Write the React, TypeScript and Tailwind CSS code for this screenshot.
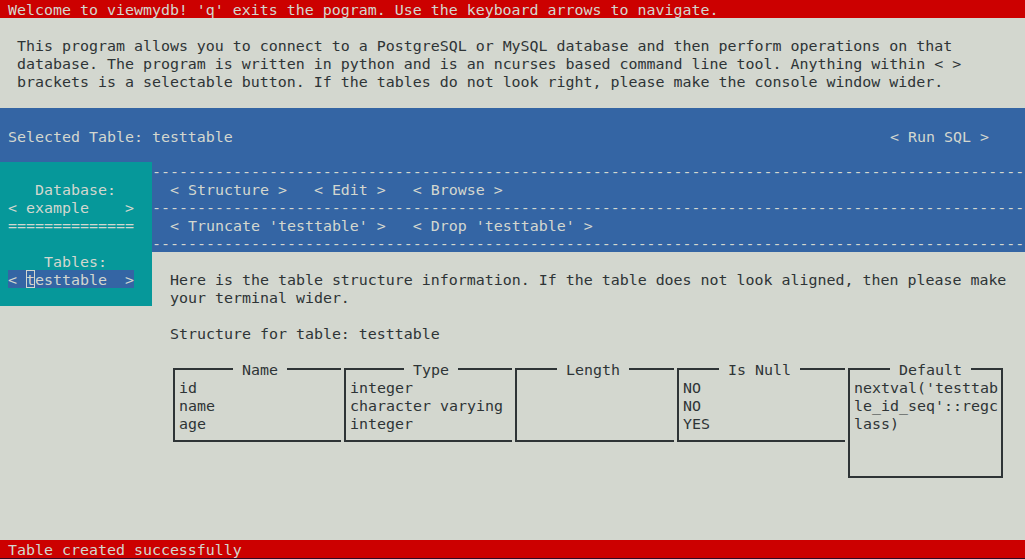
const Row = ({ children, className = "" }: { children?: React.ReactNode; className?: string }) => (
  <div className={`h-[18px] whitespace-pre pt-[1px] ${className}`}>{children}</div>
);

const dashes = "-".repeat(97);

type BoxProps = {
  cols: number;
  inner: number;
  height: number;
  title: string;
  titlePad: number;
  lines: string[];
  closed?: boolean;
};

const Box = ({ cols, inner, height, title, titlePad, lines, closed }: BoxProps) => (
  <div style={{ width: cols * 9 }} className="shrink-0">
    <div
      style={{ width: inner, height }}
      className={`ml-[3px] mt-[8px] border-l-2 border-t-2 border-b-2 border-[#2e3436] ${closed ? "border-r-2" : ""}`}
    >
      <div className="-mt-[10px] h-[18px] whitespace-pre" style={{ paddingLeft: titlePad }}>
        <span className="inline-block h-[18px] bg-[#d3d7cf] pt-[1px] align-top">{` ${title} `}</span>
      </div>
      <div className="pl-[4px]">
        {lines.map((l, i) => (
          <Row key={i}>{l}</Row>
        ))}
      </div>
    </div>
  </div>
);

export default function App() {
  return (
    <div className="h-[559px] w-[1025px] overflow-hidden bg-[#300a24]">
      <div className="-ml-px flex h-[558px] w-[1026px] flex-col bg-[#d3d7cf] font-['DejaVu_Sans_Mono',monospace] text-[14.95px] leading-[18px] text-[#2e3436]">
        {/* title bar */}
        <Row className="bg-[#cc0000] pl-[9px] text-[#d3d7cf]">
          Welcome to viewmydb! 'q' exits the pogram. Use the keyboard arrows to navigate.
        </Row>

        {/* intro */}
        <div className="py-[18px] pl-[18px]">
          <Row>This program allows you to connect to a PostgreSQL or MySQL database and then perform operations on that</Row>
          <Row>database. The program is written in python and is an ncurses based command line tool. Anything within &lt; &gt;</Row>
          <Row>brackets is a selectable button. If the tables do not look right, please make the console window wider.</Row>
        </div>

        {/* selected table header */}
        <div className="flex h-[54px] items-center justify-between bg-[#3465a4] pl-[9px] pr-[36px] pt-[3px] text-[#d3d7cf] whitespace-pre">
          <span>Selected Table: testtable</span>
          <span>&lt; Run SQL &gt;</span>
        </div>

        <div className="flex">
          {/* left panel */}
          <div className="w-[153px] shrink-0">
            <div className="h-[144px] bg-[#06989a] py-[18px] text-[#d3d7cf]">
              <Row className="pl-[36px]">Database:</Row>
              <Row className="pl-[9px]">{"< example    >"}</Row>
              <Row className="pl-[9px]">==============</Row>
              <Row />
              <Row className="pl-[45px]">Tables:</Row>
              <div className="h-[18px] whitespace-pre pl-[9px]">
                <span className="inline-block h-[18px] bg-[#3465a4] pt-[1px] align-top">
                  {"< "}
                  <span className="-mt-[1px] inline-block h-[18px] pt-[1px] align-top shadow-[inset_0_0_0_1px_#d3d7cf]">t</span>
                  {"esttable  >"}
                </span>
              </div>
            </div>
          </div>

          {/* right side */}
          <div className="min-w-0 flex-1">
            <div className="overflow-hidden bg-[#3465a4] text-[#d3d7cf]">
              <Row>{dashes}</Row>
              <Row className="pl-[18px]">{"< Structure >   < Edit >   < Browse >"}</Row>
              <Row>{dashes}</Row>
              <Row className="pl-[18px]">{"< Truncate 'testtable' >   < Drop 'testtable' >"}</Row>
              <Row>{dashes}</Row>
            </div>

            <div className="pl-[18px] pt-[18px]">
              <Row>Here is the table structure information. If the table does not look aligned, then please make</Row>
              <Row>your terminal wider.</Row>
              <Row />
              <Row>Structure for table: testtable</Row>
              <Row />
              <div className="flex h-[126px] items-start">
                <Box cols={19} inner={168} height={74} title="Name" titlePad={58} lines={["id", "name", "age"]} />
                <Box cols={19} inner={168} height={74} title="Type" titlePad={58} lines={["integer", "character varying", "integer"]} />
                <Box cols={18} inner={159} height={74} title="Length" titlePad={40} lines={[]} />
                <Box cols={19} inner={168} height={74} title="Is Null" titlePad={40} lines={["NO", "NO", "YES"]} />
                <Box
                  cols={18}
                  inner={155}
                  height={110}
                  title="Default"
                  titlePad={40}
                  closed
                  lines={["nextval('testtab", "le_id_seq'::regc", "lass)"]}
                />
              </div>
            </div>
          </div>
        </div>

        <div className="flex-1" />

        {/* status bar */}
        <Row className="bg-[#cc0000] pl-[9px] text-[#d3d7cf]">Table created successfully</Row>
      </div>
    </div>
  );
}
